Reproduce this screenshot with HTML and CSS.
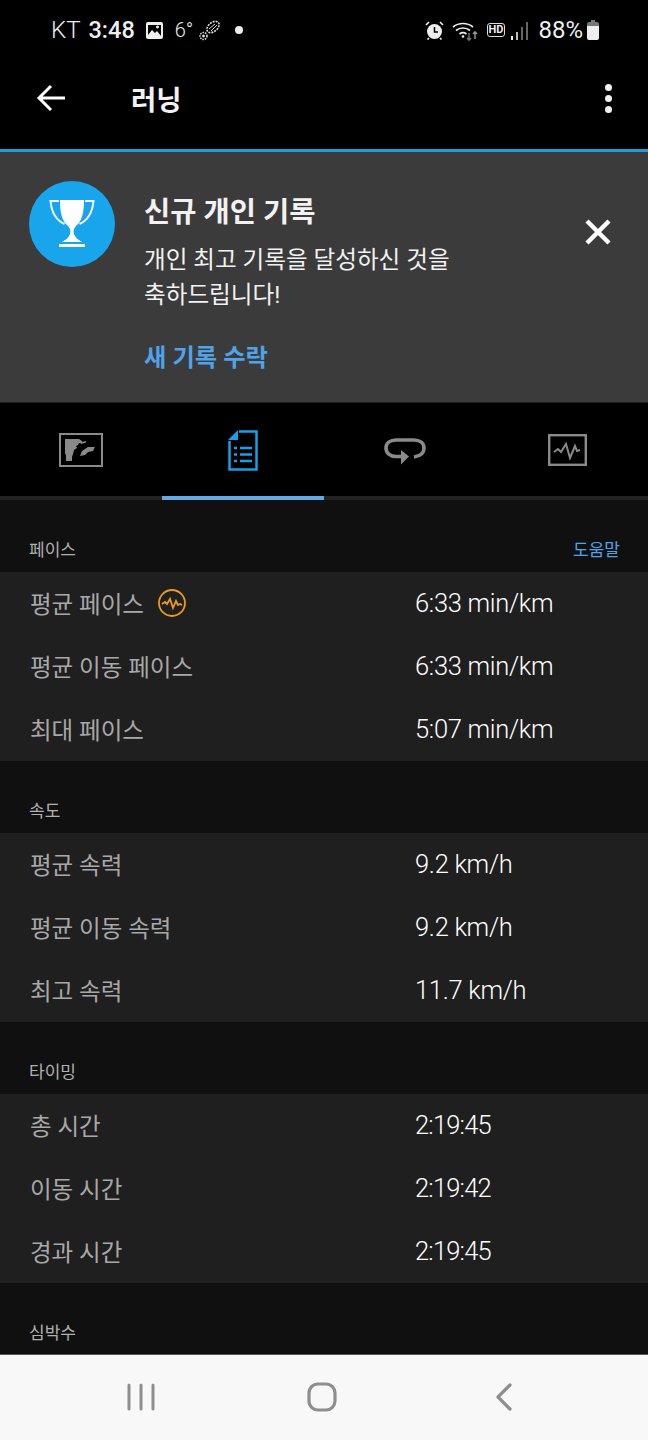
FILE: index.html
```html
<!DOCTYPE html>
<html lang="ko">
<head>
  <meta charset="UTF-8">
  <meta name="viewport" content="width=device-width, initial-scale=1.0">
  <title>러닝</title>
  <link rel="stylesheet" href="styles.css">
</head>
<body>
  <div class="phone">
    <div class="statusbar">
      <div class="status-left">
        <span class="carrier">KT</span>
        <span class="clock">3:48</span>
        <svg class="st-pic" width="17" height="17" viewBox="0 0 17 17"><path fill="#eee" fill-rule="evenodd" d="M2 0h13a2 2 0 0 1 2 2v13a2 2 0 0 1-2 2H2a2 2 0 0 1-2-2V2a2 2 0 0 1 2-2zM2 13l4-5 3 3 2-2 4 5v-11H2zM11.500 3.500a1.500 1.500 0 1 0 .01 0z"/></svg>
        <span class="temp">6°</span>
        <svg class="st-shoe" width="21" height="21" viewBox="0 0 21 21" fill="none" stroke="#ddd"><ellipse cx="14" cy="7" rx="7" ry="4.500" transform="rotate(-40 14 7)" stroke-width="1.600" stroke-dasharray="2 1"/><path d="M10 9l6-5M12 11l6-6" stroke-width="1"/><circle cx="4.500" cy="16" r="3.500" stroke-width="1.500" stroke-dasharray="1.500 1"/><circle cx="4.500" cy="16" r="1" fill="#ddd"/></svg>
        <span class="st-dot"></span>
      </div>
      <div class="status-right">
        <svg width="19" height="19" viewBox="0 0 19 19"><circle cx="9.500" cy="10.500" r="7.500" fill="#eee"/><path d="M9.500 6v5h3.500" fill="none" stroke="#000" stroke-width="1.500"/><path d="M1 4l3-3M18 4l-3-3M4 17l-1.500 1.500M15 17l1.500 1.500" stroke="#eee" stroke-width="1.600"/></svg>
        <svg class="st-wifi" width="27" height="21" viewBox="0 0 27 21" fill="none" stroke="#eee" stroke-width="1.700"><path d="M1 7a16 16 0 0 1 20 0M4 10.500a11 11 0 0 1 14 0M7.500 14a6 6 0 0 1 7 0"/><circle cx="11" cy="16.500" r="1.300" fill="#eee" stroke="none"/><path d="M17 13v7M15 18l2 2.200 2-2.200" stroke="#777" stroke-width="1.400"/><path d="M23 19v-7M21 14l2-2.200 2 2.200" stroke="#999" stroke-width="1.400"/></svg>
        <span class="st-hd">HD</span>
        <svg class="st-signal" width="17" height="19" viewBox="0 0 17 19"><rect x="0" y="15" width="2" height="4" fill="#eee"/><rect x="5" y="11" width="2" height="8" fill="#bbb"/><rect x="10" y="6" width="2" height="13" fill="#666"/><rect x="15" y="1" width="2" height="18" fill="#666"/></svg>
        <span class="battery-text">88%</span>
        <svg width="12" height="20" viewBox="0 0 12 20"><path fill="#777" d="M4 0h4v2h2a2 2 0 0 1 2 2v3H0V4a2 2 0 0 1 2-2h2z"/><path fill="#eee" d="M0 6h12v12a2 2 0 0 1-2 2H2a2 2 0 0 1-2-2z"/></svg>
      </div>
    </div>

    <header class="toolbar">
      <svg class="back" width="30" height="28" viewBox="0 0 30 28" fill="none" stroke="#fff" stroke-width="3"><path d="M29 14H3M15 2L3 14l12 12"/></svg>
      <h1 class="title">러닝</h1>
      <div class="more"><span></span><span></span><span></span></div>
    </header>

    <section class="banner">
      <div class="trophy">
        <svg width="46" height="50" viewBox="0 0 46 50"><path fill="none" stroke="#fff" stroke-width="2" d="M10 2H1.500c1 11 5 19 14 23M36 2h8.500c-1 11-5 19-14 23"/><path fill="#fff" d="M11 1h24c0 13-2 21-8 26-2 2-3 5-2 8 1 3 4 6 8 8H13c4-2 7-5 8-8 1-3 0-6-2-8-6-5-8-13-8-26zM10 45h26v3H10z"/></svg>
      </div>
      <div class="banner-body">
        <h2 class="banner-title">신규 개인 기록</h2>
        <p class="banner-text">개인 최고 기록을 달성하신 것을<br>축하드립니다!</p>
        <a class="banner-link">새 기록 수락</a>
      </div>
      <svg class="close" width="28" height="28" viewBox="0 0 28 28"><path stroke="#fff" stroke-width="4.500" d="M3 3l22 22M25 3L3 25"/></svg>
    </section>

    <nav class="tabs">
      <div class="tab">
        <svg width="44" height="34" viewBox="0 0 44 34"><rect x="1" y="1" width="42" height="32" fill="none" stroke="#8a8a8a" stroke-width="2"/><path fill="#8a8a8a" d="M6 6h14l3 2 1 2h-4l-1 2-2 1 1 2-3 2-1 4-1 3v4H7v-6l-1-2zM21 9.500l6-1.500v1.500l-5 1.500zM21 23l2-5 6-4h7l-2 4-5 1-3 3z"/></svg>
      </div>
      <div class="tab tab-doc active">
        <svg width="30" height="41" viewBox="0 0 30 41"><path fill="none" stroke="#18a0e4" stroke-width="2.500" d="M11 1.500h17.500v38H1.500V11"/><path fill="#18a0e4" d="M10 0v10H0z"/><path stroke="#18a0e4" stroke-width="2.500" d="M6 18h3M12 18h12M6 24.500h3M12 24.500h12M6 31h3M12 31h12"/></svg>
      </div>
      <div class="tab tab-loop">
        <svg width="42" height="27" viewBox="0 0 42 27" fill="none" stroke="#8a8a8a" stroke-width="3.600"><path d="M22 18.500H12C6 18.500 2 15 2 10S6 2 12 2h18c6 0 10 3 10 8s-3 8-10 9"/><path fill="#8a8a8a" stroke="none" d="M17 12l8 6.500-8 8z"/></svg>
      </div>
      <div class="tab">
        <svg width="39" height="32" viewBox="0 0 39 32" fill="none" stroke="#8a8a8a"><rect x="1.200" y="1.200" width="36.600" height="29.600" stroke-width="2.400"/><path stroke-width="2" d="M6 18l4-3 3 3 5-8 4 14 5-12 2 5 3-1"/></svg>
      </div>
    </nav>

    <main class="content">
      <div class="section-head"><span>페이스</span><a class="help">도움말</a></div>
      <div class="rows">
        <div class="row">
          <div class="row-label">평균 페이스
            <svg class="pace-icon" width="28" height="28" viewBox="0 0 28 28" fill="none" stroke="#ea9a1c"><circle cx="14" cy="14" r="13" stroke-width="1.800"/><path stroke-width="1.800" d="M4 15l3-2 2 2 3-5 3 9 3-7 2 4 2-1 2 1"/></svg>
          </div>
          <div class="row-value">6:33 min/km</div>
        </div>
        <div class="row"><div class="row-label">평균 이동 페이스</div><div class="row-value">6:33 min/km</div></div>
        <div class="row"><div class="row-label">최대 페이스</div><div class="row-value">5:07 min/km</div></div>
      </div>

      <div class="section-head"><span>속도</span></div>
      <div class="rows">
        <div class="row"><div class="row-label">평균 속력</div><div class="row-value">9.2 km/h</div></div>
        <div class="row"><div class="row-label">평균 이동 속력</div><div class="row-value">9.2 km/h</div></div>
        <div class="row"><div class="row-label">최고 속력</div><div class="row-value">11.7 km/h</div></div>
      </div>

      <div class="section-head"><span>타이밍</span></div>
      <div class="rows">
        <div class="row"><div class="row-label">총 시간</div><div class="row-value time">2:19:45</div></div>
        <div class="row"><div class="row-label">이동 시간</div><div class="row-value time">2:19:42</div></div>
        <div class="row"><div class="row-label">경과 시간</div><div class="row-value time">2:19:45</div></div>
      </div>

      <div class="section-head"><span>심박수</span></div>
    </main>

    <footer class="navbar">
      <svg width="28" height="28" viewBox="0 0 28 28" stroke="#8e8e8e" stroke-width="3" stroke-linecap="round"><path d="M2 2v24M14 2v24M26 2v24"/></svg>
      <svg class="nav-home" width="30" height="30" viewBox="0 0 30 30"><rect x="2" y="2" width="26" height="26" rx="9" fill="none" stroke="#8e8e8e" stroke-width="3.200"/></svg>
      <svg width="18" height="28" viewBox="0 0 18 28" fill="none" stroke="#8e8e8e" stroke-width="3.200" stroke-linecap="round" stroke-linejoin="round"><path d="M15 2L3 14l12 12"/></svg>
    </footer>
  </div>
</body>
</html>
```

FILE: styles.css
```css
* {
  box-sizing: border-box;
}
body {
  margin: 0;
  background: #000;
  font-family: Roboto, "Noto Sans CJK KR", sans-serif;
}
h1, h2, p {
  margin: 0;
}
.phone {
  width: 648px;
  height: 1440px;
  display: flex;
  flex-direction: column;
  overflow: hidden;
}

/* status bar */
.statusbar {
  height: 60px;
  padding: 0 49px 0 51px;
  display: flex;
  justify-content: space-between;
  align-items: center;
  color: #eee;
}
.status-left, .status-right {
  display: flex;
  align-items: center;
}
.carrier {
  font-size: 24px;
  font-weight: 300;
}
.clock {
  font-size: 23.500px;
  font-weight: 500;
  margin-left: 8px;
}
.st-pic {
  margin-left: 11px;
}
.temp {
  font-size: 20px;
  font-weight: 300;
  margin-left: 12px;
}
.st-shoe {
  margin-left: 6px;
}
.st-dot {
  width: 8px;
  height: 8px;
  border-radius: 50%;
  background: #eee;
  margin-left: 15px;
}
.st-wifi {
  margin-left: 8px;
}
.st-hd {
  margin-left: 8px;
  border: 1.500px solid #ddd;
  border-radius: 3px;
  font-size: 11px;
  font-weight: 700;
  line-height: 12px;
  padding: 0 1px;
}
.st-signal {
  margin-left: 6px;
}
.battery-text {
  font-size: 24px;
  font-weight: 400;
  margin: 0 4px 0 10px;
}

/* toolbar */
.toolbar {
  height: 89px;
  padding: 0 36px 14px 36px;
  display: flex;
  align-items: center;
}
.title {
  color: #f2f2f2;
  font-size: 27.500px;
  font-weight: 700;
  margin-left: 65px;
  flex: 1;
}
.more {
  display: flex;
  flex-direction: column;
  gap: 4px;
  margin-top: 2px;
}
.more span {
  width: 7px;
  height: 7px;
  border-radius: 50%;
  background: #f2f2f2;
}

/* record banner */
.banner {
  height: 254px;
  background: #3b3b3b;
  border-top: 3px solid #1f9ddb;
  border-bottom: 1px solid #1f1f1f;
  padding: 29px 36px 0 29px;
  display: flex;
  align-items: flex-start;
}
.trophy {
  width: 86px;
  height: 86px;
  border-radius: 50%;
  background: #18a5ec;
  display: flex;
  align-items: center;
  justify-content: center;
  flex-shrink: 0;
}
.banner-body {
  flex: 1;
  margin-left: 29px;
}
.banner-title {
  color: #f2f2f2;
  font-size: 28.500px;
  font-weight: 700;
  line-height: 36px;
  margin-top: 14px;
}
.banner-text {
  color: #f2f2f2;
  font-size: 23.600px;
  line-height: 35px;
  margin-top: 12px;
}
.banner-link {
  display: block;
  color: #4fa3ea;
  font-size: 24.300px;
  font-weight: 700;
  line-height: 36px;
  margin-top: 27px;
}
.close {
  margin-top: 37px;
}

/* tabs */
.tabs {
  height: 97px;
  display: flex;
  flex-shrink: 0;
  border-bottom: 4px solid #222;
  background: #000;
}
.tab {
  flex: 1;
  display: flex;
  align-items: center;
  justify-content: center;
  margin-bottom: -4px;
  border-bottom: 4px solid transparent;
}
.tab.active {
  border-bottom-color: #62a9e8;
}
.tab-doc {
  padding-top: 2px;
}
.tab-loop {
  padding-top: 4px;
}

/* data list */
.content {
  flex: 1;
  background: #101010;
  overflow: hidden;
}
.section-head {
  height: 72px;
  padding: 37px 28px 0 29px;
  display: flex;
  justify-content: space-between;
  color: #b0b0b0;
  font-size: 17px;
  line-height: 26px;
}
.help {
  color: #4fa3ea;
}
.rows {
  background: #1f1f1f;
}
.row {
  height: 63px;
  display: flex;
  align-items: center;
  padding: 0 0 2px 30px;
}
.row-label {
  width: 385px;
  color: #a8a8a8;
  font-size: 23.500px;
  display: flex;
  align-items: center;
}
.pace-icon {
  margin-left: 14px;
}
.row-value {
  color: #fff;
  font-size: 25.500px;
  font-weight: 300;
  letter-spacing: -0.300px;
}
.row-value.time {
  letter-spacing: -0.800px;
}

/* android nav */
.navbar {
  height: 86px;
  flex-shrink: 0;
  background: #f8f8f8;
  border-top: 1px solid #555;
  padding: 0 0 2px 127px;
  display: flex;
  align-items: center;
}
.nav-home {
  margin: 0 158px 0 152px;
}
```
